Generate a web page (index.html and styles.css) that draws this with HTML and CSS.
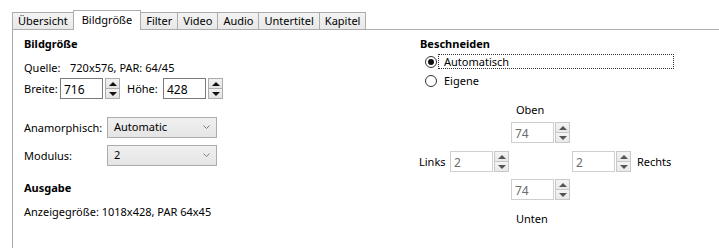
FILE: index.html
```html
<!DOCTYPE html>
<html lang="de">
<head>
  <meta charset="UTF-8">
  <title>Bildgröße</title>
  <link rel="stylesheet" href="styles.css">
</head>
<body>
  <div class="tabs">
    <div class="tab">Übersicht</div>
    <div class="tab active">Bildgröße</div>
    <div class="tab">Filter</div>
    <div class="tab">Video</div>
    <div class="tab">Audio</div>
    <div class="tab">Untertitel</div>
    <div class="tab">Kapitel</div>
  </div>
  <div class="panel">
    <div class="col-left">
      <div class="heading">Bildgröße</div>
      <div class="source"><span class="source-label">Quelle:</span>720x576, PAR: 64/45</div>
      <div class="size-row">
        <span class="size-label">Breite:</span>
        <div class="spin">
          <input type="text" value="716">
          <div class="spin-btns"><span class="btn up"></span><span class="btn down"></span></div>
        </div>
        <span class="size-label second">Höhe:</span>
        <div class="spin">
          <input type="text" value="428">
          <div class="spin-btns"><span class="btn up"></span><span class="btn down"></span></div>
        </div>
      </div>
      <div class="select-row first">
        <span class="select-label">Anamorphisch:</span>
        <div class="select">
          <span>Automatic</span>
          <svg width="7" height="4" viewBox="0 0 7 4"><polyline points="0.5,0.5 3.5,3.5 6.5,0.5" fill="none" stroke="#7a7a7a" stroke-width="1"/></svg>
        </div>
      </div>
      <div class="select-row">
        <span class="select-label">Modulus:</span>
        <div class="select">
          <span>2</span>
          <svg width="7" height="4" viewBox="0 0 7 4"><polyline points="0.5,0.5 3.5,3.5 6.5,0.5" fill="none" stroke="#7a7a7a" stroke-width="1"/></svg>
        </div>
      </div>
      <div class="heading output">Ausgabe</div>
      <div class="source">Anzeigegröße: 1018x428, PAR 64x45</div>
    </div>

    <div class="col-right">
      <div class="heading">Beschneiden</div>
      <div class="radio">
        <span class="radio-dot checked"></span>
        <span class="radio-label focused">Automatisch</span>
      </div>
      <div class="radio">
        <span class="radio-dot"></span>
        <span class="radio-label">Eigene</span>
      </div>

      <div class="crop">
        <span class="crop-name top">Oben</span>
        <div class="spin disabled top-spin">
          <input type="text" value="74" disabled>
          <div class="spin-btns"><span class="btn up"></span><span class="btn down"></span></div>
        </div>

        <span class="crop-side left">Links</span>
        <div class="spin disabled mid left-spin">
          <input type="text" value="2" disabled>
          <div class="spin-btns"><span class="btn up"></span><span class="btn down"></span></div>
        </div>
        <div class="spin disabled mid right-spin">
          <input type="text" value="2" disabled>
          <div class="spin-btns"><span class="btn up"></span><span class="btn down"></span></div>
        </div>
        <span class="crop-side right">Rechts</span>

        <div class="spin disabled bottom-spin">
          <input type="text" value="74" disabled>
          <div class="spin-btns"><span class="btn up"></span><span class="btn down"></span></div>
        </div>
        <span class="crop-name bottom">Unten</span>
      </div>
    </div>
  </div>
</body>
</html>
```

FILE: styles.css
```css
* {
  margin: 0;
  box-sizing: border-box;
}
body {
  margin: 0;
  background: #fff;
  color: #000;
  font-family: 'Noto Sans', 'Segoe UI', Arial, sans-serif;
  font-size: 11px;
  line-height: 16px;
  overflow: hidden;
}

/* tab strip */
.tabs {
  display: flex;
  align-items: flex-end;
  height: 29px;
  padding-left: 12px;
}
.tab {
  height: 17px;
  padding: 0 5px;
  border: 1px solid #acacac;
  border-bottom: none;
  background: linear-gradient(#f3f3f3, #e8e8e8);
  line-height: 16px;
  margin-left: -1px;
}
.tab:first-child {
  margin-left: 0;
}
.tab.active {
  height: 20px;
  margin-bottom: -1px;
  padding: 1px 8px 0 8px;
  background: #fff;
  position: relative;
  z-index: 1;
}

/* panel */
.panel {
  display: flex;
  margin-left: 12px;
  height: 219px;
  border-top: 1px solid #acacac;
  border-left: 1px solid #acacac;
}
.col-left {
  width: 407px;
  padding: 6px 0 0 11px;
}
.col-right {
  padding-top: 6px;
}
.heading {
  font-weight: bold;
}
.heading.output {
  margin-top: 14px;
}
.source {
  margin-top: 8px;
}
.source-label {
  display: inline-block;
  width: 46px;
}

/* spin boxes */
.size-row {
  display: flex;
  align-items: center;
  margin-top: 2px;
}
.size-label {
  width: 36px;
}
.size-label.second {
  margin-left: 7px;
}
.spin {
  display: flex;
  height: 21px;
}
.spin input {
  width: 43px;
  height: 21px;
  border: 1px solid #7a7a7a;
  padding: 2px 3px 0 3px;
  font: inherit;
  font-size: 12px;
  color: #000;
  background: #fff;
  outline: none;
}
.spin-btns {
  display: flex;
  flex-direction: column;
  width: 15px;
  margin-left: 2px;
}
.btn {
  height: 11px;
  border: 1px solid #acacac;
  background: linear-gradient(#f2f2f2, #e3e3e3);
  display: flex;
  align-items: center;
  justify-content: center;
}
.btn.down {
  margin-top: -1px;
}
.btn.up::before {
  content: '';
  border-left: 4px solid transparent;
  border-right: 4px solid transparent;
  border-bottom: 4px solid #111;
}
.btn.down::before {
  content: '';
  border-left: 4px solid transparent;
  border-right: 4px solid transparent;
  border-top: 4px solid #111;
}
.spin.disabled input {
  border-color: #cfcfcf;
  color: #6d6d6d;
}
.spin.disabled .spin-btns {
  margin-left: 1px;
}
.spin.disabled .btn {
  border-color: #c8c8c8;
  background: linear-gradient(#f4f4f4, #e9e9e9);
}
.spin.disabled .btn.up::before {
  border-bottom-color: #555;
}
.spin.disabled .btn.down::before {
  border-top-color: #555;
}

/* drop downs */
.select-row {
  display: flex;
  align-items: center;
  margin-top: 7px;
}
.select-row.first {
  margin-top: 18px;
}
.select-label {
  width: 83px;
}
.select {
  display: flex;
  align-items: center;
  justify-content: space-between;
  width: 110px;
  height: 21px;
  padding: 0 6px 1px 6px;
  border: 1px solid #acacac;
  background: linear-gradient(#f0f0f0, #e5e5e5);
}

/* crop radios */
.radio {
  display: flex;
  align-items: center;
  height: 19px;
  padding-left: 5px;
}
.radio-dot {
  width: 12px;
  height: 12px;
  border: 1px solid #333;
  border-radius: 50%;
  background: #fff;
  display: flex;
  align-items: center;
  justify-content: center;
}
.radio-dot.checked::after {
  content: '';
  width: 6px;
  height: 6px;
  border-radius: 50%;
  background: #111;
}
.radio-label {
  margin-left: 1px;
  padding: 0 5px;
  line-height: 13px;
  border: 1px solid transparent;
}
.radio-label.focused {
  width: 236px;
  border: 1px dotted #333;
}

/* crop grid */
.crop {
  display: grid;
  grid-template-columns: 29px 59px 59px 59px auto;
  column-gap: 2px;
  margin-top: 12px;
  margin-left: -1px;
}
.crop-name {
  grid-column: 3;
  padding-left: 5px;
}
.crop-name.top {
  grid-row: 1;
}
.top-spin {
  grid-column: 3;
  grid-row: 2;
  margin-top: 4px;
}
.crop-side {
  grid-row: 3;
  align-self: center;
  margin-top: 8px;
}
.crop-side.left {
  grid-column: 1;
}
.crop-side.right {
  grid-column: 5;
  margin-left: 4px;
}
.spin.mid {
  grid-row: 3;
  margin-top: 8px;
}
.left-spin {
  grid-column: 2;
}
.right-spin {
  grid-column: 4;
}
.bottom-spin {
  grid-column: 3;
  grid-row: 4;
  margin-top: 7px;
}
.crop-name.bottom {
  grid-row: 5;
  margin-top: 11px;
}
```
